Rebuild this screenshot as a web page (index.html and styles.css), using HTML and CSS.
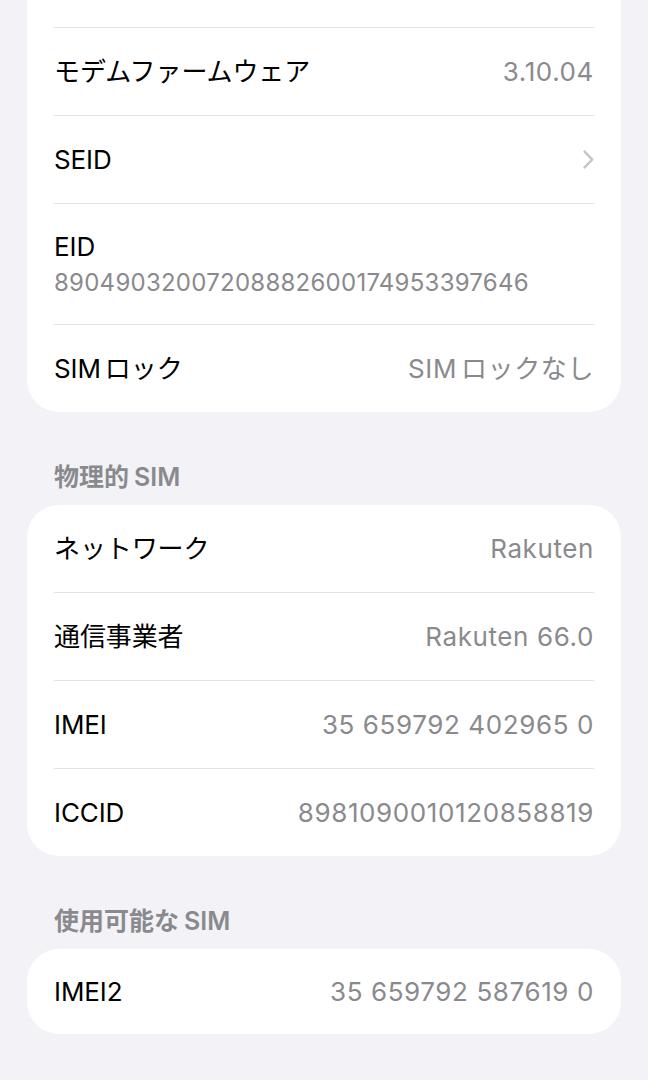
FILE: index.html
```html
<!DOCTYPE html>
<html lang="ja">
<head>
<meta charset="utf-8">
<link rel="stylesheet" href="styles.css">
</head>
<body>
<main class="page">
  <section class="card card-cut">
    <div class="row row-spacer"><div class="row-inner"></div></div>
    <div class="row"><div class="row-inner"><span class="label">モデムファームウェア</span><span class="value">3.10.04</span></div></div>
    <div class="row"><div class="row-inner"><span class="label">SEID</span>
      <svg class="chevron" width="11" height="19" viewBox="0 0 11 19"><polyline points="1.6,1.6 9.2,9.5 1.6,17.4" fill="none" stroke="#c4c4c7" stroke-width="2.4" stroke-linecap="round" stroke-linejoin="round"/></svg>
    </div></div>
    <div class="row"><div class="row-inner row-stack"><span class="label">EID</span><span class="value value-sub">89049032007208882600174953397646</span></div></div>
    <div class="row"><div class="row-inner"><span class="label"><span class="latin">SIM</span>ロック</span><span class="value"><span class="latin">SIM</span>ロックなし</span></div></div>
  </section>

  <h2 class="section-title">物理的<span class="latin-after">SIM</span></h2>
  <section class="card">
    <div class="row"><div class="row-inner"><span class="label">ネットワーク</span><span class="value">Rakuten</span></div></div>
    <div class="row"><div class="row-inner"><span class="label">通信事業者</span><span class="value">Rakuten 66.0</span></div></div>
    <div class="row"><div class="row-inner"><span class="label">IMEI</span><span class="value">35 659792 402965 0</span></div></div>
    <div class="row"><div class="row-inner"><span class="label">ICCID</span><span class="value">8981090010120858819</span></div></div>
  </section>

  <h2 class="section-title">使用可能な<span class="latin-after">SIM</span></h2>
  <section class="card">
    <div class="row"><div class="row-inner row-short"><span class="label">IMEI2</span><span class="value">35 659792 587619 0</span></div></div>
  </section>
</main>
</body>
</html>
```
FILE: styles.css
```css
* { box-sizing: border-box; }
html, body {
  margin: 0;
  padding: 0;
  background: #f2f2f7;
}
body {
  font-family: Inter, "Noto Sans CJK JP", sans-serif;
  color: #000;
  -webkit-font-smoothing: antialiased;
}
.page {
  padding: 0 27px 60px;
}
.card {
  background: #fff;
  border-radius: 32px;
  overflow: hidden;
}
.card-cut {
  border-top-left-radius: 0;
  border-top-right-radius: 0;
}
.row {
  padding-left: 27px;
}
.row-inner {
  margin-right: 27px;
  height: 88px;
  display: flex;
  align-items: center;
  justify-content: space-between;
  border-bottom: 1px solid #e2e2e5;
}
.row:last-child .row-inner {
  border-bottom: none;
  height: 87px;
}
.row-spacer .row-inner {
  height: 28px;
}
.row-short .row-inner,
.row:last-child .row-short {
  height: 85px;
}
.row-stack {
  height: 121px;
  flex-direction: column;
  align-items: flex-start;
  justify-content: center;
  gap: 4px;
}
.label {
  font-size: 26px;
  line-height: 34px;
  letter-spacing: -0.1px;
}
.value {
  font-size: 26px;
  line-height: 34px;
  color: #8a8a8e;
  letter-spacing: 0.6px;
}
.value-sub {
  font-size: 24px;
  line-height: 30px;
  letter-spacing: 0.25px;
}
.latin {
  margin-right: 4px;
}
.latin-after {
  margin-left: 5px;
}
.chevron {
  display: block;
  margin-right: 0;
}
.section-title {
  margin: 0;
  padding: 49px 0 12px 27px;
  font-size: 25px;
  line-height: 32px;
  font-weight: 600;
  color: #8a8a8e;
}
```
